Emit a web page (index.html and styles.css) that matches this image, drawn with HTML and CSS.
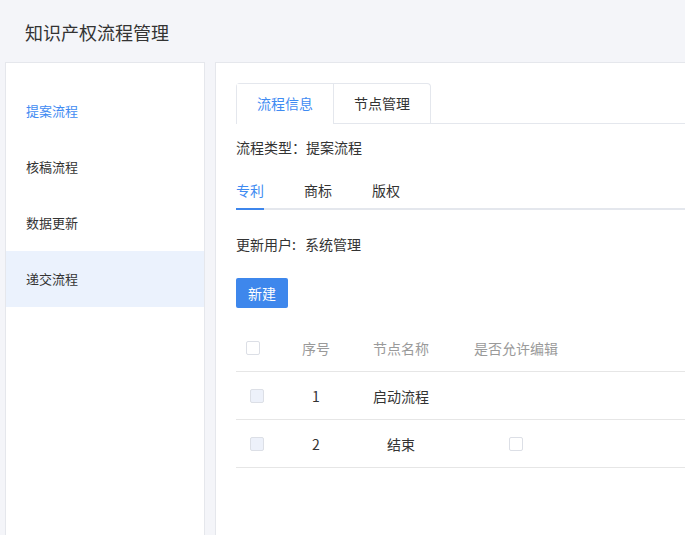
FILE: index.html
```html
<!DOCTYPE html>
<html lang="zh">
<head>
<meta charset="utf-8">
<title>知识产权流程管理</title>
<link rel="stylesheet" href="styles.css">
</head>
<body>
<header class="page-header">知识产权流程管理</header>
<div class="layout">
  <aside class="sidebar">
    <div class="menu-item active-text">提案流程</div>
    <div class="menu-item">核稿流程</div>
    <div class="menu-item">数据更新</div>
    <div class="menu-item selected">递交流程</div>
  </aside>
  <main class="main">
    <div class="card-tabs">
      <div class="card-tab-group">
        <div class="card-tab active">流程信息</div>
        <div class="card-tab">节点管理</div>
      </div>
    </div>
    <div class="flow-type">流程类型：提案流程</div>
    <div class="sub-tabs">
      <div class="sub-tab active">专利</div>
      <div class="sub-tab">商标</div>
      <div class="sub-tab">版权</div>
    </div>
    <div class="user-line"><span class="label">更新用户:</span><span class="value">系统管理</span></div>
    <button class="btn-primary">新建</button>
    <div class="table">
      <div class="row head">
        <div class="cell cb-cell-head"><span class="checkbox"></span></div>
        <div class="cell center">序号</div>
        <div class="cell center">节点名称</div>
        <div class="cell center">是否允许编辑</div>
        <div class="cell"></div>
      </div>
      <div class="row">
        <div class="cell cb-cell"><span class="checkbox disabled"></span></div>
        <div class="cell center">1</div>
        <div class="cell center">启动流程</div>
        <div class="cell center"></div>
        <div class="cell"></div>
      </div>
      <div class="row">
        <div class="cell cb-cell"><span class="checkbox disabled"></span></div>
        <div class="cell center">2</div>
        <div class="cell center">结束</div>
        <div class="cell center"><span class="checkbox"></span></div>
        <div class="cell"></div>
      </div>
    </div>
  </main>
</div>
</body>
</html>
```
FILE: styles.css
```css
html, body {
  margin: 0;
  padding: 0;
  overflow: hidden;
  height: 100%;
}
body {
  background: #f4f5f9;
  font-family: "Noto Sans CJK SC", "Noto Sans", sans-serif;
  font-size: 14px;
  color: #333;
}
.page-header {
  height: 62px;
  line-height: 64px;
  padding-left: 25px;
  font-size: 18px;
  color: #333;
}
.layout {
  display: flex;
  gap: 10px;
  padding-left: 5px;
  width: 760px;
  height: 473px;
}
.sidebar {
  width: 198px;
  flex: none;
  background: #fff;
  border: 1px solid #e5e7ec;
  border-bottom: none;
  padding-top: 20px;
}
.menu-item {
  height: 56px;
  line-height: 56px;
  padding-left: 20px;
  font-size: 13px;
  color: #333;
}
.menu-item.active-text {
  color: #3f8bf2;
}
.menu-item.selected {
  background: #ebf2fd;
}
.main {
  flex: 1;
  background: #fff;
  border: 1px solid #e5e7ec;
  border-bottom: none;
  padding: 20px;
}
.card-tabs {
  border-bottom: 1px solid #e4e7ed;
  display: flex;
}
.card-tab-group {
  display: flex;
  border: 1px solid #e4e7ed;
  border-bottom: none;
  border-radius: 4px 4px 0 0;
}
.card-tab {
  height: 39px;
  line-height: 39px;
  padding: 0 20px;
  color: #333;
}
.card-tab + .card-tab {
  border-left: 1px solid #e4e7ed;
}
.card-tab.active {
  color: #3f8bf2;
  background: #fff;
  margin-bottom: -1px;
  padding-bottom: 1px;
}
.flow-type {
  margin-top: 13px;
  line-height: 20px;
}
.sub-tabs {
  margin-top: 13px;
  display: flex;
  gap: 40px;
  border-bottom: 2px solid #e4e7ed;
  height: 38px;
}
.sub-tab {
  line-height: 40px;
  height: 40px;
  box-sizing: border-box;
  color: #333;
}
.sub-tab.active {
  color: #3f8bf2;
  border-bottom: 2px solid #3d86ec;
}
.user-line {
  margin-top: 24px;
  line-height: 20px;
}
.user-line .label {
  display: inline-block;
  width: 69px;
}
.btn-primary {
  display: block;
  margin-top: 24px;
  width: 52px;
  height: 30px;
  border: none;
  border-radius: 2px;
  background: #3e87ec;
  color: #fff;
  font-family: inherit;
  font-size: 14px;
  padding: 0;
}
.table {
  margin-top: 16px;
}
.row {
  display: grid;
  grid-template-columns: 40px 80px 90px 140px 1fr;
  height: 47px;
  border-bottom: 1px solid #e6e6e6;
  align-items: center;
}
.row.head {
  color: #9a9a9a;
}
.cell.center {
  text-align: center;
}
.cell.center .checkbox {
  margin: 0 auto;
}
.cb-cell-head {
  padding-left: 10px;
}
.cb-cell {
  padding-left: 14px;
}
.checkbox {
  display: block;
  width: 12px;
  height: 12px;
  border: 1px solid #dcdfe6;
  border-radius: 2px;
  background: #fff;
}
.checkbox.disabled {
  background: #edf1fa;
}
```
